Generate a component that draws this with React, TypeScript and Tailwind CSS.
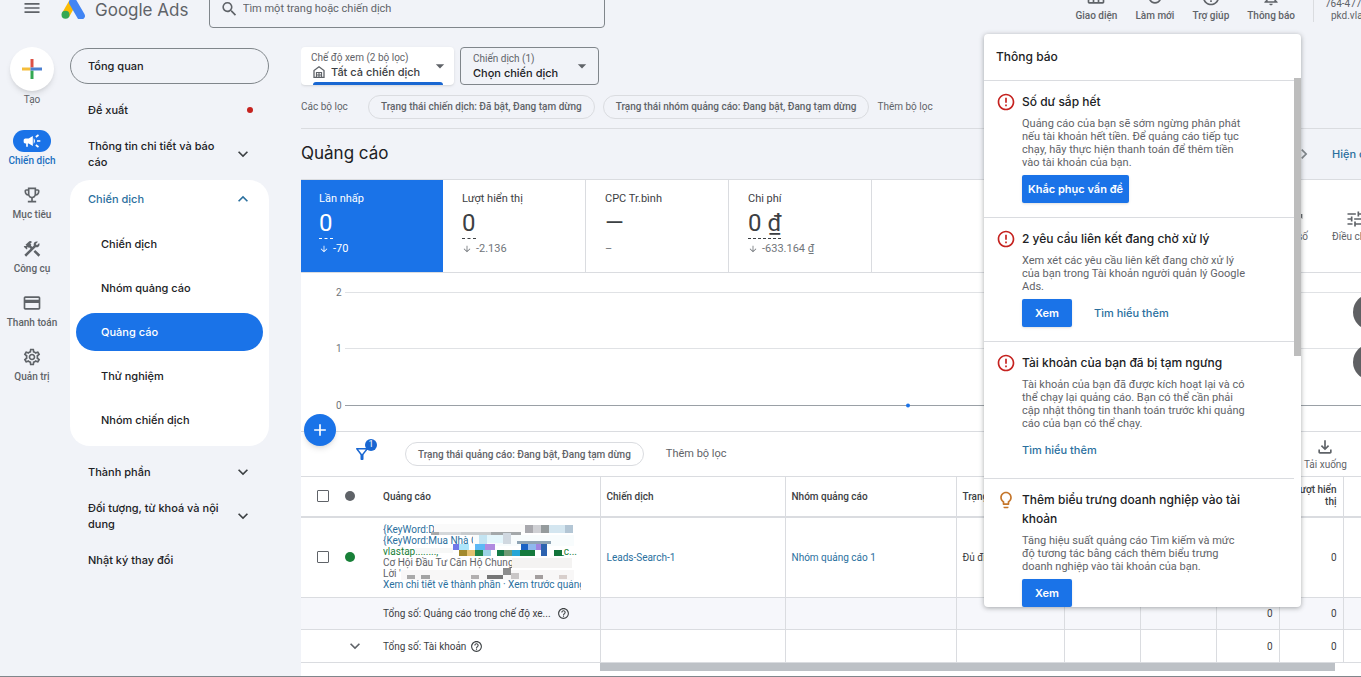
import type { ReactNode } from "react";
import type { IconType } from "react-icons";
import {
  MdAdd,
  MdArrowDownward,
  MdArrowDropDown,
  MdCampaign,
  MdChevronRight,
  MdConstruction,
  MdCreditCard,
  MdErrorOutline,
  MdExpandLess,
  MdExpandMore,
  MdHelpOutline,
  MdLightbulbOutline,
  MdMenu,
  MdNotificationsNone,
  MdOutlineEmojiEvents,
  MdOutlineFileDownload,
  MdOutlineFilterAlt,
  MdOutlineSettings,
  MdOutlineViewWeek,
  MdRefresh,
  MdSearch,
  MdTrendingUp,
  MdTune,
} from "react-icons/md";

const railItems: { name: string; icon: IconType; active?: boolean }[] = [
  { name: "Chiến dịch", icon: MdCampaign, active: true },
  { name: "Mục tiêu", icon: MdOutlineEmojiEvents },
  { name: "Công cụ", icon: MdConstruction },
  { name: "Thanh toán", icon: MdCreditCard },
  { name: "Quản trị", icon: MdOutlineSettings },
];

const headerActions: { name: string; icon: IconType }[] = [
  { name: "Giao diện", icon: MdOutlineViewWeek },
  { name: "Làm mới", icon: MdRefresh },
  { name: "Trợ giúp", icon: MdHelpOutline },
  { name: "Thông báo", icon: MdNotificationsNone },
];

const campaignLinks = ["Chiến dịch", "Nhóm quảng cáo", "Quảng cáo", "Thử nghiệm", "Nhóm chiến dịch"];

const stats = [
  { name: "Lần nhấp", value: "0", change: "-70", active: true },
  { name: "Lượt hiển thị", value: "0", change: "-2.136" },
  { name: "CPC Tr.bình", value: "—", change: null },
  { name: "Chi phí", value: "0 ₫", change: "-633.164 ₫" },
];

const notices = [
  {
    title: "Số dư sắp hết",
    body: "Quảng cáo của bạn sẽ sớm ngừng phân phát\nnếu tài khoản hết tiền. Để quảng cáo tiếp tục\nchạy, hãy thực hiện thanh toán để thêm tiền\nvào tài khoản của bạn.",
    action: "Khắc phục vấn đề",
  },
  {
    title: "2 yêu cầu liên kết đang chờ xử lý",
    body: "Xem xét các yêu cầu liên kết đang chờ xử lý\ncủa bạn trong Tài khoản người quản lý Google\nAds.",
    action: "Xem",
    link: "Tìm hiểu thêm",
  },
  {
    title: "Tài khoản của bạn đã bị tạm ngưng",
    body: "Tài khoản của bạn đã được kích hoạt lại và có\nthể chạy lại quảng cáo. Bạn có thể cần phải\ncập nhật thông tin thanh toán trước khi quảng\ncáo của bạn có thể chạy.",
    link: "Tìm hiểu thêm",
  },
  {
    title: "Thêm biểu trưng doanh nghiệp vào tài\nkhoản",
    body: "Tăng hiệu suất quảng cáo Tìm kiếm và mức\nđộ tương tác bằng cách thêm biểu trưng\ndoanh nghiệp vào tài khoản của bạn.",
    action: "Xem",
    tip: true,
  },
];

// x, y, width, height, colour of the blocks that hide the ad text
const blocks: [number, number, number, number, string][] = [
  [51, 0, 91, 8, "#fafafa"],
  [48, 8, 8, 3, "#a9a9a9"],
  [56, 8, 22, 3, "#d5d8da"],
  [78, 8, 30, 3, "#c9ccce"],
  [108, 8, 30, 3, "#a4a8aa"],
  [142, 1, 8, 8, "#a9a9ae"],
  [150, 1, 8, 8, "#cfd0d4"],
  [158, 1, 8, 8, "#959b9d"],
  [166, 1, 16, 8, "#d4e6f0"],
  [182, 1, 8, 8, "#b3c6d5"],
  [90, 11, 101, 11, "#f8fcfd"],
  [96, 11, 8, 11, "#c3e4f2"],
  [104, 11, 16, 8, "#e4f6fc"],
  [120, 9, 8, 11, "#d0d8e0"],
  [134, 17, 34, 3, "#8fa4b4"],
  [32, 24, 38, 5, "#f7f8f7"],
  [70, 20, 6, 6, "#6f78e8"],
  [76, 20, 10, 6, "#aee6fb"],
  [92, 20, 10, 6, "#5cb8f5"],
  [102, 20, 10, 6, "#b08ae0"],
  [138, 20, 7, 6, "#1b62c4"],
  [145, 20, 8, 6, "#8fb8ee"],
  [153, 20, 7, 6, "#a184e0"],
  [76, 26, 8, 6, "#a38a2d"],
  [84, 26, 8, 6, "#e5c170"],
  [92, 26, 8, 6, "#23874a"],
  [100, 26, 8, 6, "#9ed3e6"],
  [114, 26, 7, 6, "#137b47"],
  [121, 26, 8, 6, "#6f9b75"],
  [129, 26, 8, 6, "#25a6d6"],
  [137, 26, 15, 6, "#157a3d"],
  [158, 20, 6, 12, "#2d63b0"],
  [171, 26, 8, 6, "#12743a"],
  [129, 34, 60, 10, "#f4f3f2"],
  [18, 46, 173, 10, "#f8f7f7"],
  [24, 51, 8, 4, "#a9a9a9"],
  [38, 51, 9, 4, "#a3a3a3"],
  [88, 51, 8, 4, "#b2afaf"],
  [104, 51, 16, 4, "#767676"],
  [120, 44, 8, 7, "#8c8c8c"],
  [128, 49, 8, 6, "#c9c6c6"],
  [152, 51, 8, 4, "#a39e9e"],
  [176, 51, 8, 4, "#d8cfcc"],
];

function AdsLogo() {
  return (
    <svg viewBox="0 0 24 22" className="h-[22px] w-6 shrink-0" aria-hidden="true">
      <path d="M8.300 3.600 1.200 15.800l7 4 6.800-12z" fill="#fbbc04" />
      <path d="M8.400 3.400a4 4 0 0 1 7-.2l7.900 13.600a4 4 0 0 1-7 4L8.500 7.300a4 4 0 0 1-.1-3.900z" fill="#4285f4" />
      <circle cx="4.500" cy="17.700" r="4" fill="#34a853" />
    </svg>
  );
}

function CreateIcon() {
  return (
    <svg viewBox="0 0 20 20" className="size-5" aria-hidden="true">
      <path d="M8.500 0h3v8.500h-3z" fill="#dd5144" />
      <path d="M0 8.500h8.500v3H0z" fill="#f5bd3a" />
      <path d="M8.500 11.500h3V20h-3z" fill="#34a853" />
      <path d="M8.500 8.500H20v3H8.500z" fill="#4a7fd0" />
    </svg>
  );
}

function HomeIcon() {
  return (
    <svg viewBox="0 0 12 12" className="size-3" fill="none" stroke="#5f6368" aria-hidden="true">
      <path d="M1 11.400V4.500L6 .8l5 3.700v6.900z" strokeWidth="1.300" />
      <path d="M3.500 11.400V6.500h5v4.900M6 6.500v4.900M3.500 9h5" strokeWidth="1.200" />
    </svg>
  );
}

function Chip({ children }: { children: ReactNode }) {
  return (
    <button className="h-6 shrink-0 rounded-full border border-[#dadce0] px-3 text-[10px] font-medium text-[#5f6368]">
      {children}
    </button>
  );
}

function NavRow({ children, icon: Icon }: { children: ReactNode; icon?: IconType }) {
  return (
    <a href="#" className="flex h-11 items-center justify-between pr-4 pl-[18px]">
      <span className="w-36 leading-4">{children}</span>
      {Icon && <Icon className="size-5 text-[#3c4043]" />}
    </a>
  );
}

export default function App() {
  return (
    <div className="relative flex h-screen flex-col overflow-hidden border-b border-[#80868b] bg-[#f1f3f8] font-['Roboto',sans-serif] text-[#3c4043]">
      <header className="-mt-5 flex h-14 shrink-0 items-center">
        <button aria-label="Menu" className="ml-[22px]">
          <MdMenu className="size-5 text-[#5f6368]" />
        </button>
        <a href="#" className="ml-[19px] flex w-[148px] items-center gap-[10px] whitespace-nowrap">
          <AdsLogo />
          <span className="pt-[3px] font-['Inter',sans-serif] text-[17px] leading-5 text-[#5f6368]">Google Ads</span>
        </a>
        <label className="flex h-10 w-[396px] items-center gap-1 rounded-sm border border-[#80868b] pt-[2px] pl-[10px]">
          <MdSearch className="size-5 text-[#5f6368]" />
          <input type="text" aria-label="Tìm kiếm" placeholder="Tìm một trang hoặc chiến dịch" className="w-full bg-transparent text-[11px] outline-none placeholder:text-[#5f6368]" />
        </label>
        <div className="ml-auto flex h-full items-end gap-[18px] pb-[14px] whitespace-nowrap">
          {headerActions.map((action) => (
            <button key={action.name} className="flex flex-col items-center gap-[3px] text-[10px] leading-3 font-medium text-[#5f6368]">
              <action.icon className="size-5" />
              {action.name}
            </button>
          ))}
          <div className="flex h-8 w-12 flex-col items-start justify-end border-l border-[#dadce0] pl-[11px] text-[10px] leading-3 text-[#5f6368]">
            <span>764-477</span>
            <span className="pl-[6px]">pkd.vla</span>
          </div>
        </div>
      </header>

      <div className="flex min-h-0 flex-1">
        <nav className="w-16 shrink-0 pt-[11px] text-[10px] text-[#5f6368]">
          <button className="flex w-full flex-col items-center">
            <span className="flex size-11 items-center justify-center rounded-full bg-white shadow-md">
              <CreateIcon />
            </span>
            <span className="leading-[18px]">Tạo</span>
          </button>
          <div className="pt-[21px]">
            {railItems.map((item) => (
              <a key={item.name} href="#" className="flex h-[54px] flex-col items-center whitespace-nowrap">
                <span className={item.active ? "flex h-[22px] w-[38px] items-center justify-center rounded-full bg-[#1a73e8] text-white" : "flex h-[22px] items-center"}>
                  <item.icon className="size-5" />
                </span>
                <span className={item.active ? "leading-[18px] font-medium text-[#1a6fc0]" : "leading-[18px] font-medium"}>{item.name}</span>
              </a>
            ))}
          </div>
        </nav>

        <nav className="ml-[6px] w-[199px] shrink-0 pt-3 font-['Inter',sans-serif] text-[11px] font-medium text-[#202124]">
          <a href="#" className="mb-1 flex h-9 items-center rounded-full border border-[#80868b] pl-[17px]">
            Tổng quan
          </a>
          <a href="#" className="flex h-11 items-center justify-between pr-4 pl-[18px]">
            Đề xuất
            <span className="size-[6px] rounded-full bg-[#c5221f]"></span>
          </a>
          <NavRow icon={MdExpandMore}>Thông tin chi tiết và báo cáo</NavRow>
          <div className="mt-1 mb-1 rounded-[20px] bg-white pb-1">
            <a href="#" className="mb-1 flex h-[38px] items-center justify-between pr-4 pl-[18px] text-[#2a6f9e]">
              Chiến dịch
              <MdExpandLess className="size-5" />
            </a>
            {campaignLinks.map((name) => (
              <div key={name} className="flex h-11 items-center px-[6px]">
                <a href="#" className={name === "Quảng cáo" ? "flex h-[38px] flex-1 items-center rounded-full bg-[#1a73e8] pl-[25px] text-white" : "pl-[25px]"}>
                  {name}
                </a>
              </div>
            ))}
          </div>
          <NavRow icon={MdExpandMore}>Thành phần</NavRow>
          <NavRow icon={MdExpandMore}>Đối tượng, từ khoá và nội dung</NavRow>
          <NavRow>Nhật ký thay đổi</NavRow>
        </nav>

        <main className="ml-8 min-w-0 flex-1 overflow-hidden">
          <div className="flex gap-[6px] pt-[11px]">
            <label className="relative h-[38px] w-[153px] rounded-sm bg-white px-[10px] pt-[5px] shadow-sm">
              <span className="block text-[10px] leading-3 text-[#5f6368]">Chế độ xem (2 bộ lọc)</span>
              <span className="flex items-center gap-[6px] pl-[2px]">
                <HomeIcon />
                <select className="w-28 appearance-none bg-transparent font-['Inter',sans-serif] text-[11px] leading-4 font-medium">
                  <option>Tất cả chiến dịch</option>
                </select>
              </span>
              <MdArrowDropDown className="absolute top-[9px] right-1 size-5 text-[#5f6368]" />
              <span className="absolute bottom-0 left-3 h-[3px] w-[130px] rounded-t bg-[#1967d2]"></span>
            </label>
            <label className="relative h-[38px] w-[139px] rounded-sm border border-[#80868b] px-3 pt-[5px]">
              <span className="block text-[10px] leading-3 text-[#5f6368]">Chiến dịch (1)</span>
              <select className="block w-28 appearance-none bg-transparent font-['Inter',sans-serif] text-[11px] leading-4 font-medium text-[#202124]">
                <option>Chọn chiến dịch</option>
              </select>
              <MdArrowDropDown className="absolute top-2 right-[6px] size-5 text-[#5f6368]" />
            </label>
          </div>

          <div className="flex h-11 items-center gap-2 border-b border-[#dadce0] whitespace-nowrap">
            <span className="w-[59px] text-[10px] text-[#5f6368]">Các bộ lọc</span>
            <Chip>Trạng thái chiến dịch: Đã bật, Đang tạm dừng</Chip>
            <Chip>Trạng thái nhóm quảng cáo: Đang bật, Đang tạm dừng</Chip>
            <button className="text-[10px] text-[#5f6368]">Thêm bộ lọc</button>
          </div>

          <div className="flex h-[50px] items-center">
            <h1 className="flex-1 font-['Inter',sans-serif] text-[17px] text-[#202124]">Quảng cáo</h1>
            <MdChevronRight className="size-5 text-[#80868b]" />
            <a href="#" className="ml-[18px] w-[29px] font-['Inter',sans-serif] text-[11px] font-medium whitespace-nowrap text-[#2a6f9e]">
              Hiện chi tiết
            </a>
          </div>

          <section className="border-t border-[#dadce0] bg-white">
            <div className="flex border-b border-[#dadce0]">
              {stats.map((stat) => (
                <button
                  key={stat.name}
                  className={
                    stat.active
                      ? "flex h-[92px] w-[142px] flex-col items-start bg-[#1a73e8] pt-[11px] pl-[18px] text-white"
                      : "flex h-[92px] w-[143px] flex-col items-start border-r border-[#dadce0] pt-[11px] pl-[19px]"
                  }
                >
                  <span className="text-[11px] leading-4">{stat.name}</span>
                  <span className={stat.change ? "mb-[2px] h-8 border-b border-dashed text-2xl leading-8" : "mb-[2px] h-8 text-2xl leading-8"}>{stat.value}</span>
                  <span className={stat.active ? "flex items-center gap-1 text-[11px] leading-4" : "flex items-center gap-1 text-[11px] leading-4 text-[#70757a]"}>
                    {stat.change ? <MdArrowDownward className="size-[10px]" /> : "–"}
                    {stat.change}
                  </span>
                </button>
              ))}
              <div className="flex flex-1 items-center justify-end gap-6 overflow-hidden text-[10px] leading-3 whitespace-nowrap text-[#5f6368]">
                <button className="flex flex-col items-center gap-[2px]">
                  <MdTrendingUp className="size-5" />
                  Chỉ số
                </button>
                <button className="flex w-[29px] flex-col items-start gap-[2px]">
                  <MdTune className="ml-[13px] size-5 shrink-0" />
                  Điều chỉnh
                </button>
              </div>
            </div>

            <svg viewBox="0 0 1060 158" preserveAspectRatio="xMinYMin slice" className="block h-[158px] w-full font-['Roboto',sans-serif] text-[10px]" role="img" aria-label="Lần nhấp">
              <g fill="#70757a">
                <text x="35" y="23">2</text>
                <text x="35" y="79">1</text>
                <text x="35" y="136">0</text>
              </g>
              <path d="M44 19.500H1060M44 75.500H1060" stroke="#e0e2e5" />
              <path d="M44 132.500H1060" stroke="#9aa0a6" />
              <circle cx="607" cy="132.500" r="2" fill="#1a73e8" />
            </svg>

            <div className="relative flex h-[45px] items-center border-t border-[#dadce0] pl-[52px]">
              <button aria-label="Tạo quảng cáo" className="absolute -top-[18px] left-[3px] flex size-8 items-center justify-center rounded-full bg-[#1a73e8] text-white shadow-md">
                <MdAdd className="size-5" />
              </button>
              <button aria-label="Bộ lọc" className="relative mr-[34px] text-[#1967d2]">
                <MdOutlineFilterAlt className="size-[18px]" />
                <span className="absolute -top-[6px] -right-[6px] flex size-3 items-center justify-center rounded-full bg-[#1967d2] text-[9px] text-white">1</span>
              </button>
              <Chip>Trạng thái quảng cáo: Đang bật, Đang tạm dừng</Chip>
              <button className="ml-[22px] text-[11px] text-[#5f6368]">Thêm bộ lọc</button>
              <button className="mr-[14px] ml-auto flex flex-col items-center text-[10px] text-[#5f6368]">
                <MdOutlineFileDownload className="size-5" />
                Tải xuống
              </button>
            </div>

            <table className="w-full table-fixed border-collapse text-left text-[10px] [&_td]:border-[#dadce0] [&_th]:border-[#dadce0]">
              <colgroup>
                <col className="w-[82px]" />
                <col className="w-[217px]" />
                <col className="w-[185px]" />
                <col className="w-[171px]" />
                <col className="w-[108px]" />
                <col className="w-[76px]" />
                <col className="w-[76px]" />
                <col className="w-[63px]" />
                <col className="w-[64px]" />
                <col />
              </colgroup>
              <thead>
                <tr className="h-10 border-t border-b-2 border-[#dadce0] [&_th]:font-medium">
                  <th>
                    <span className="flex items-center gap-4 pl-4">
                      <input type="checkbox" aria-label="Chọn tất cả" className="size-3 appearance-none rounded-[1px] border-[1.5px] border-[#5f6368]" />
                      <span className="size-[10px] rounded-full bg-[#5f6368]"></span>
                    </span>
                  </th>
                  <th className="border-r">Quảng cáo</th>
                  <th className="border-r pl-[6px]">Chiến dịch</th>
                  <th className="border-r pl-[6px]">Nhóm quảng cáo</th>
                  <th className="border-r pl-[6px]">Trạng thái</th>
                  <th className="border-r"></th>
                  <th className="border-r"></th>
                  <th className="border-r"></th>
                  <th className="border-r pr-[6px] text-right leading-3 whitespace-nowrap">
                    Lượt hiển
                    <br />
                    thị
                  </th>
                  <th></th>
                </tr>
              </thead>
              <tbody>
                <tr className="h-[81px] border-b border-[#dadce0]">
                  <td>
                    <span className="flex items-center gap-4 pl-4">
                      <input type="checkbox" aria-label="Chọn quảng cáo" className="size-3 appearance-none rounded-[1px] border-[1.5px] border-[#5f6368]" />
                      <span className="size-[10px] rounded-full bg-[#188038]"></span>
                    </span>
                  </td>
                  <td className="border-r">
                    <div className="relative w-[198px] overflow-hidden leading-[11px] whitespace-nowrap text-[#2a6f9e]">
                      <div>{"{KeyWord:D"}</div>
                      <div>{"{KeyWord:Mua Nhà C"}</div>
                      <div className="flex justify-between pr-1 text-[#188038]">
                        <span>vlastap........,</span>
                        <span>_c...</span>
                      </div>
                      <div className="text-[#5f6368]">Cơ Hội Đầu Tư Căn Hộ Chung</div>
                      <div className="text-[#5f6368]">Lời '</div>
                      <div>
                        <a href="#">Xem chi tiết về thành phần</a> · <a href="#">Xem trước quảng cáo</a>
                      </div>
                      <svg viewBox="0 0 198 66" className="absolute top-0 left-0 h-[66px] w-[198px]" shapeRendering="crispEdges" aria-hidden="true">
                        {blocks.map(([x, y, w, h, fill], idx) => (
                          <rect key={idx} x={x} y={y} width={w} height={h} fill={fill} />
                        ))}
                      </svg>
                    </div>
                  </td>
                  <td className="border-r pl-[6px] text-[#2a6f9e]"><a href="#">Leads-Search-1</a></td>
                  <td className="border-r pl-[6px] text-[#2a6f9e]"><a href="#">Nhóm quảng cáo 1</a></td>
                  <td className="border-r pl-[6px]">Đủ điều kiện</td>
                  <td className="border-r"></td>
                  <td className="border-r"></td>
                  <td className="border-r pr-[6px] text-right">0</td>
                  <td className="border-r pr-[6px] text-right">0</td>
                  <td></td>
                </tr>
                <tr className="h-8 border-b border-[#dadce0] bg-[#f6f7fb]">
                  <td></td>
                  <td className="border-r">
                    <span className="flex items-center gap-[6px]">
                      Tổng số: Quảng cáo trong chế độ xe...
                      <MdHelpOutline className="size-[13px]" />
                    </span>
                  </td>
                  <td className="border-r"></td>
                  <td className="border-r"></td>
                  <td className="border-r"></td>
                  <td className="border-r"></td>
                  <td className="border-r"></td>
                  <td className="border-r pr-[6px] text-right">0</td>
                  <td className="border-r pr-[6px] text-right">0</td>
                  <td></td>
                </tr>
                <tr className="h-[33px] border-b border-[#dadce0]">
                  <td>
                    <MdExpandMore className="ml-11 size-5 text-[#5f6368]" />
                  </td>
                  <td className="border-r">
                    <span className="flex items-center gap-1">
                      Tổng số: Tài khoản
                      <MdHelpOutline className="size-[13px]" />
                    </span>
                  </td>
                  <td className="border-r"></td>
                  <td className="border-r"></td>
                  <td className="border-r"></td>
                  <td className="border-r"></td>
                  <td className="border-r"></td>
                  <td className="border-r pr-[6px] text-right">0</td>
                  <td className="border-r pr-[6px] text-right">0</td>
                  <td></td>
                </tr>
              </tbody>
            </table>
            <div className="pr-[26px] pb-[6px] pl-[299px]">
              <div className="h-2 bg-[#bdc1c6]"></div>
            </div>
          </section>
        </main>
      </div>

      {/* floating controls, half off the window's edge */}
      <div className="absolute top-[294px] -right-7 flex flex-col gap-[14px]">
        <button aria-label="Lên" className="size-9 rounded-full bg-[#5f6063]"></button>
        <button aria-label="Xuống" className="size-9 rounded-full bg-[#5f6063]"></button>
      </div>

      {/* notification popup */}
      <aside className="absolute top-[34px] right-[60px] h-[573px] w-[317px] overflow-hidden rounded bg-white shadow-[0_1px_5px_rgba(60,64,67,0.45)]">
        <h2 className="flex h-[47px] items-center border-b border-[#dadce0] pl-3 font-['Inter',sans-serif] text-xs font-medium text-[#202124]">Thông báo</h2>
        {notices.map((notice) => (
          <div key={notice.title} className="mr-[7px] flex gap-[6px] border-b border-[#dadce0] pt-[11px] pb-[14px] pl-3">
            {notice.tip ? (
              <MdLightbulbOutline className="size-5 shrink-0 text-[#c5762b]" />
            ) : (
              <MdErrorOutline className="size-5 shrink-0 text-[#c5221f]" />
            )}
            <div className="whitespace-pre">
              <h3 className="font-['Inter',sans-serif] text-xs leading-[19px] font-medium text-[#202124]">{notice.title}</h3>
              <p className="my-[6px] text-[11px] leading-[13px] text-[#5f6368]">{notice.body}</p>
              <div className="flex h-7 items-center font-['Inter',sans-serif] text-[11px]">
                {notice.action && <button className="mr-[22px] h-7 min-w-[50px] rounded-xs bg-[#1a73e8] px-[6px] font-semibold text-white shadow-sm">{notice.action}</button>}
                {notice.link && <a href="#" className="font-medium text-[#2a6f9e]">{notice.link}</a>}
              </div>
            </div>
          </div>
        ))}
        <div className="absolute top-11 right-0 h-[278px] w-[7px] bg-[#bdbdbd]"></div>
      </aside>
    </div>
  );
}
